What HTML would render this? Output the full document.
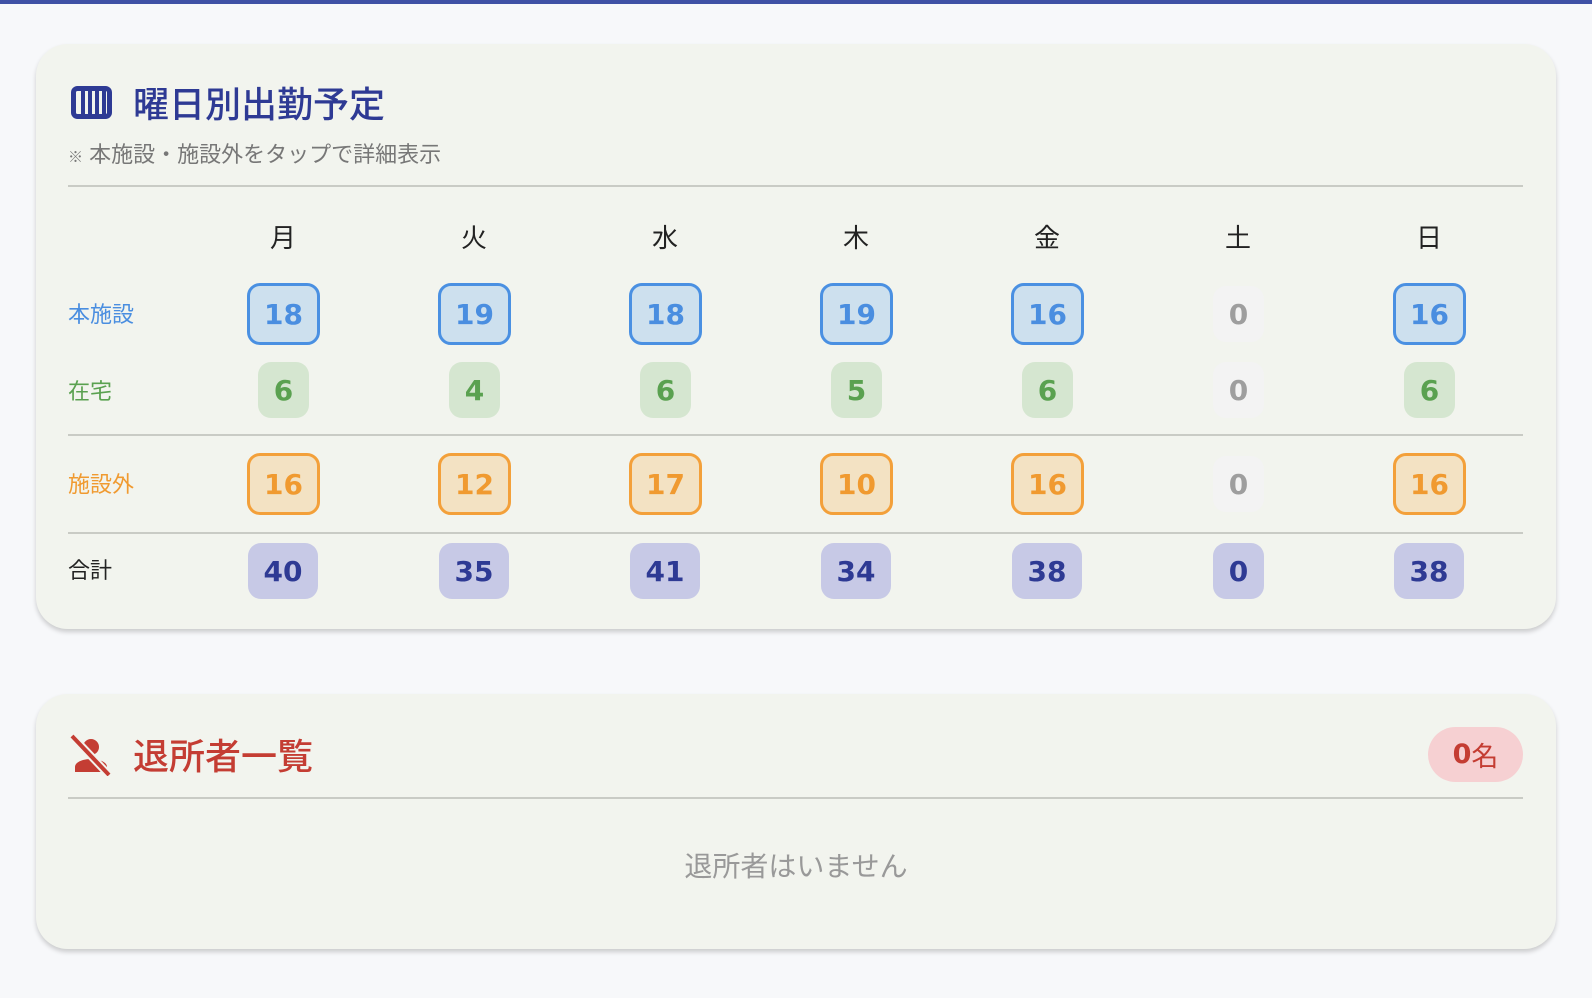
<!DOCTYPE html>
<html><head><meta charset="utf-8"><style>
*{margin:0;padding:0;box-sizing:border-box}
body{width:1592px;height:998px;background:#f7f8fa;font-family:"Liberation Sans","Noto Sans CJK JP",sans-serif;position:relative;overflow:hidden}
.bar{position:absolute;left:0;top:0;width:1592px;height:4px;background:#3f51a5}
.card{position:absolute;left:36px;width:1520px;background:#f2f4ee;border-radius:32px;box-shadow:0 3px 5px rgba(0,0,0,.18)}
.a{position:absolute}
.hr{position:absolute;left:32px;width:1455px;height:2px;background:#c9cbc5}
.day{position:absolute;top:174px;width:80px;margin-left:-40px;text-align:center;font-size:26px;color:#222}
.lbl{position:absolute;left:32px;font-size:22px}
.b{position:absolute;display:flex;align-items:center;justify-content:center;font-weight:bold;font-size:28px;border-radius:13px;font-family:"DejaVu Sans","Liberation Sans",sans-serif;letter-spacing:0px}
.blue{width:73px;height:62px;margin-left:-36px;border:3px solid #4a90e2;background:#cde0ee;color:#4a8ee0}
.green{width:51px;height:56px;margin-left:-25px;background:#d5e6d0;color:#5aa150}
.org{width:73px;height:62px;margin-left:-36px;border:3px solid #f3a03a;background:#f3e2c3;color:#f09a30}
.tot{width:70px;height:56px;margin-left:-35px;background:#c7c9e6;color:#2e3a94}
.tot0{width:51px;margin-left:-25px}
.z{width:51px;height:56px;margin-left:-25px;background:#f3f3f3;color:#9e9e9e;border:none}
</style></head><body>
<div class="bar"></div>
<div class="card" style="top:44px;height:585px">
  <svg class="a" style="left:35px;top:42px" width="41" height="33" viewBox="0 0 41 33"><rect x="2.5" y="2.5" width="36" height="28" rx="4" fill="none" stroke="#2e3a94" stroke-width="5"/><rect x="10" y="4" width="4" height="25" fill="#2e3a94"/><rect x="17" y="4" width="4" height="25" fill="#2e3a94"/><rect x="24" y="4" width="4" height="25" fill="#2e3a94"/><rect x="31" y="4" width="4" height="25" fill="#2e3a94"/></svg>
  <div class="a" style="left:97px;top:32px;font-size:36px;color:#2e3a94;font-weight:500">曜日別出勤予定</div>
  <div class="a" style="left:32px;top:93px;font-size:22px;color:#777"><span style="font-size:15px">※</span> 本施設・施設外をタップで詳細表示</div>
  <div class="hr" style="top:141px"></div>
  <div class="day" style="left:247px">月</div><div class="day" style="left:438px">火</div><div class="day" style="left:629px">水</div><div class="day" style="left:820px">木</div><div class="day" style="left:1011px">金</div><div class="day" style="left:1202px">土</div><div class="day" style="left:1393px">日</div>
  <div class="lbl" style="top:253px;color:#4a8ee0">本施設</div>
  <div class="b blue" style="left:247px;top:239px">18</div><div class="b blue" style="left:438px;top:239px">19</div><div class="b blue" style="left:629px;top:239px">18</div><div class="b blue" style="left:820px;top:239px">19</div><div class="b blue" style="left:1011px;top:239px">16</div><div class="b z" style="left:1202px;top:242px">0</div><div class="b blue" style="left:1393px;top:239px">16</div>
  <div class="lbl" style="top:330px;color:#5aa150">在宅</div>
  <div class="b green" style="left:247px;top:318px">6</div><div class="b green" style="left:438px;top:318px">4</div><div class="b green" style="left:629px;top:318px">6</div><div class="b green" style="left:820px;top:318px">5</div><div class="b green" style="left:1011px;top:318px">6</div><div class="b z" style="left:1202px;top:318px">0</div><div class="b green" style="left:1393px;top:318px">6</div>
  <div class="hr" style="top:390px"></div>
  <div class="lbl" style="top:423px;color:#f09a30">施設外</div>
  <div class="b org" style="left:247px;top:409px">16</div><div class="b org" style="left:438px;top:409px">12</div><div class="b org" style="left:629px;top:409px">17</div><div class="b org" style="left:820px;top:409px">10</div><div class="b org" style="left:1011px;top:409px">16</div><div class="b z" style="left:1202px;top:412px">0</div><div class="b org" style="left:1393px;top:409px">16</div>
  <div class="hr" style="top:488px"></div>
  <div class="lbl" style="top:509px;color:#222">合計</div>
  <div class="b tot" style="left:247px;top:499px">40</div><div class="b tot" style="left:438px;top:499px">35</div><div class="b tot" style="left:629px;top:499px">41</div><div class="b tot" style="left:820px;top:499px">34</div><div class="b tot" style="left:1011px;top:499px">38</div><div class="b tot tot0" style="left:1202px;top:499px">0</div><div class="b tot" style="left:1393px;top:499px">38</div>
</div>
<div class="card" style="top:694px;height:255px">
  <svg class="a" style="left:33px;top:40px" width="44" height="42" viewBox="0 0 44 42"><circle cx="22" cy="13" r="8" fill="#c43d33"/><path d="M6 38v-5c0-5 8-8 16-8s16 3 16 8v5z" fill="#c43d33"/><path d="M3 2L40 41" stroke="#f2f4ee" stroke-width="8"/><path d="M3 2L40 41" stroke="#c43d33" stroke-width="4"/></svg>
  <div class="a" style="left:97px;top:34px;font-size:36px;color:#c43d33;font-weight:500">退所者一覧</div>
  <div class="a" style="left:1392px;top:33px;width:95px;height:55px;border-radius:28px;background:#f6d0d2;color:#c43d33;font-size:27px;font-weight:bold;display:flex;align-items:center;justify-content:center"><span style="font-family:'DejaVu Sans',sans-serif">0</span><span style="font-weight:normal">名</span></div>
  <div class="hr" style="top:103px"></div>
  <div class="a" style="left:0;width:1520px;top:151px;text-align:center;font-size:28px;color:#999">退所者はいません</div>
</div>
</body></html>
